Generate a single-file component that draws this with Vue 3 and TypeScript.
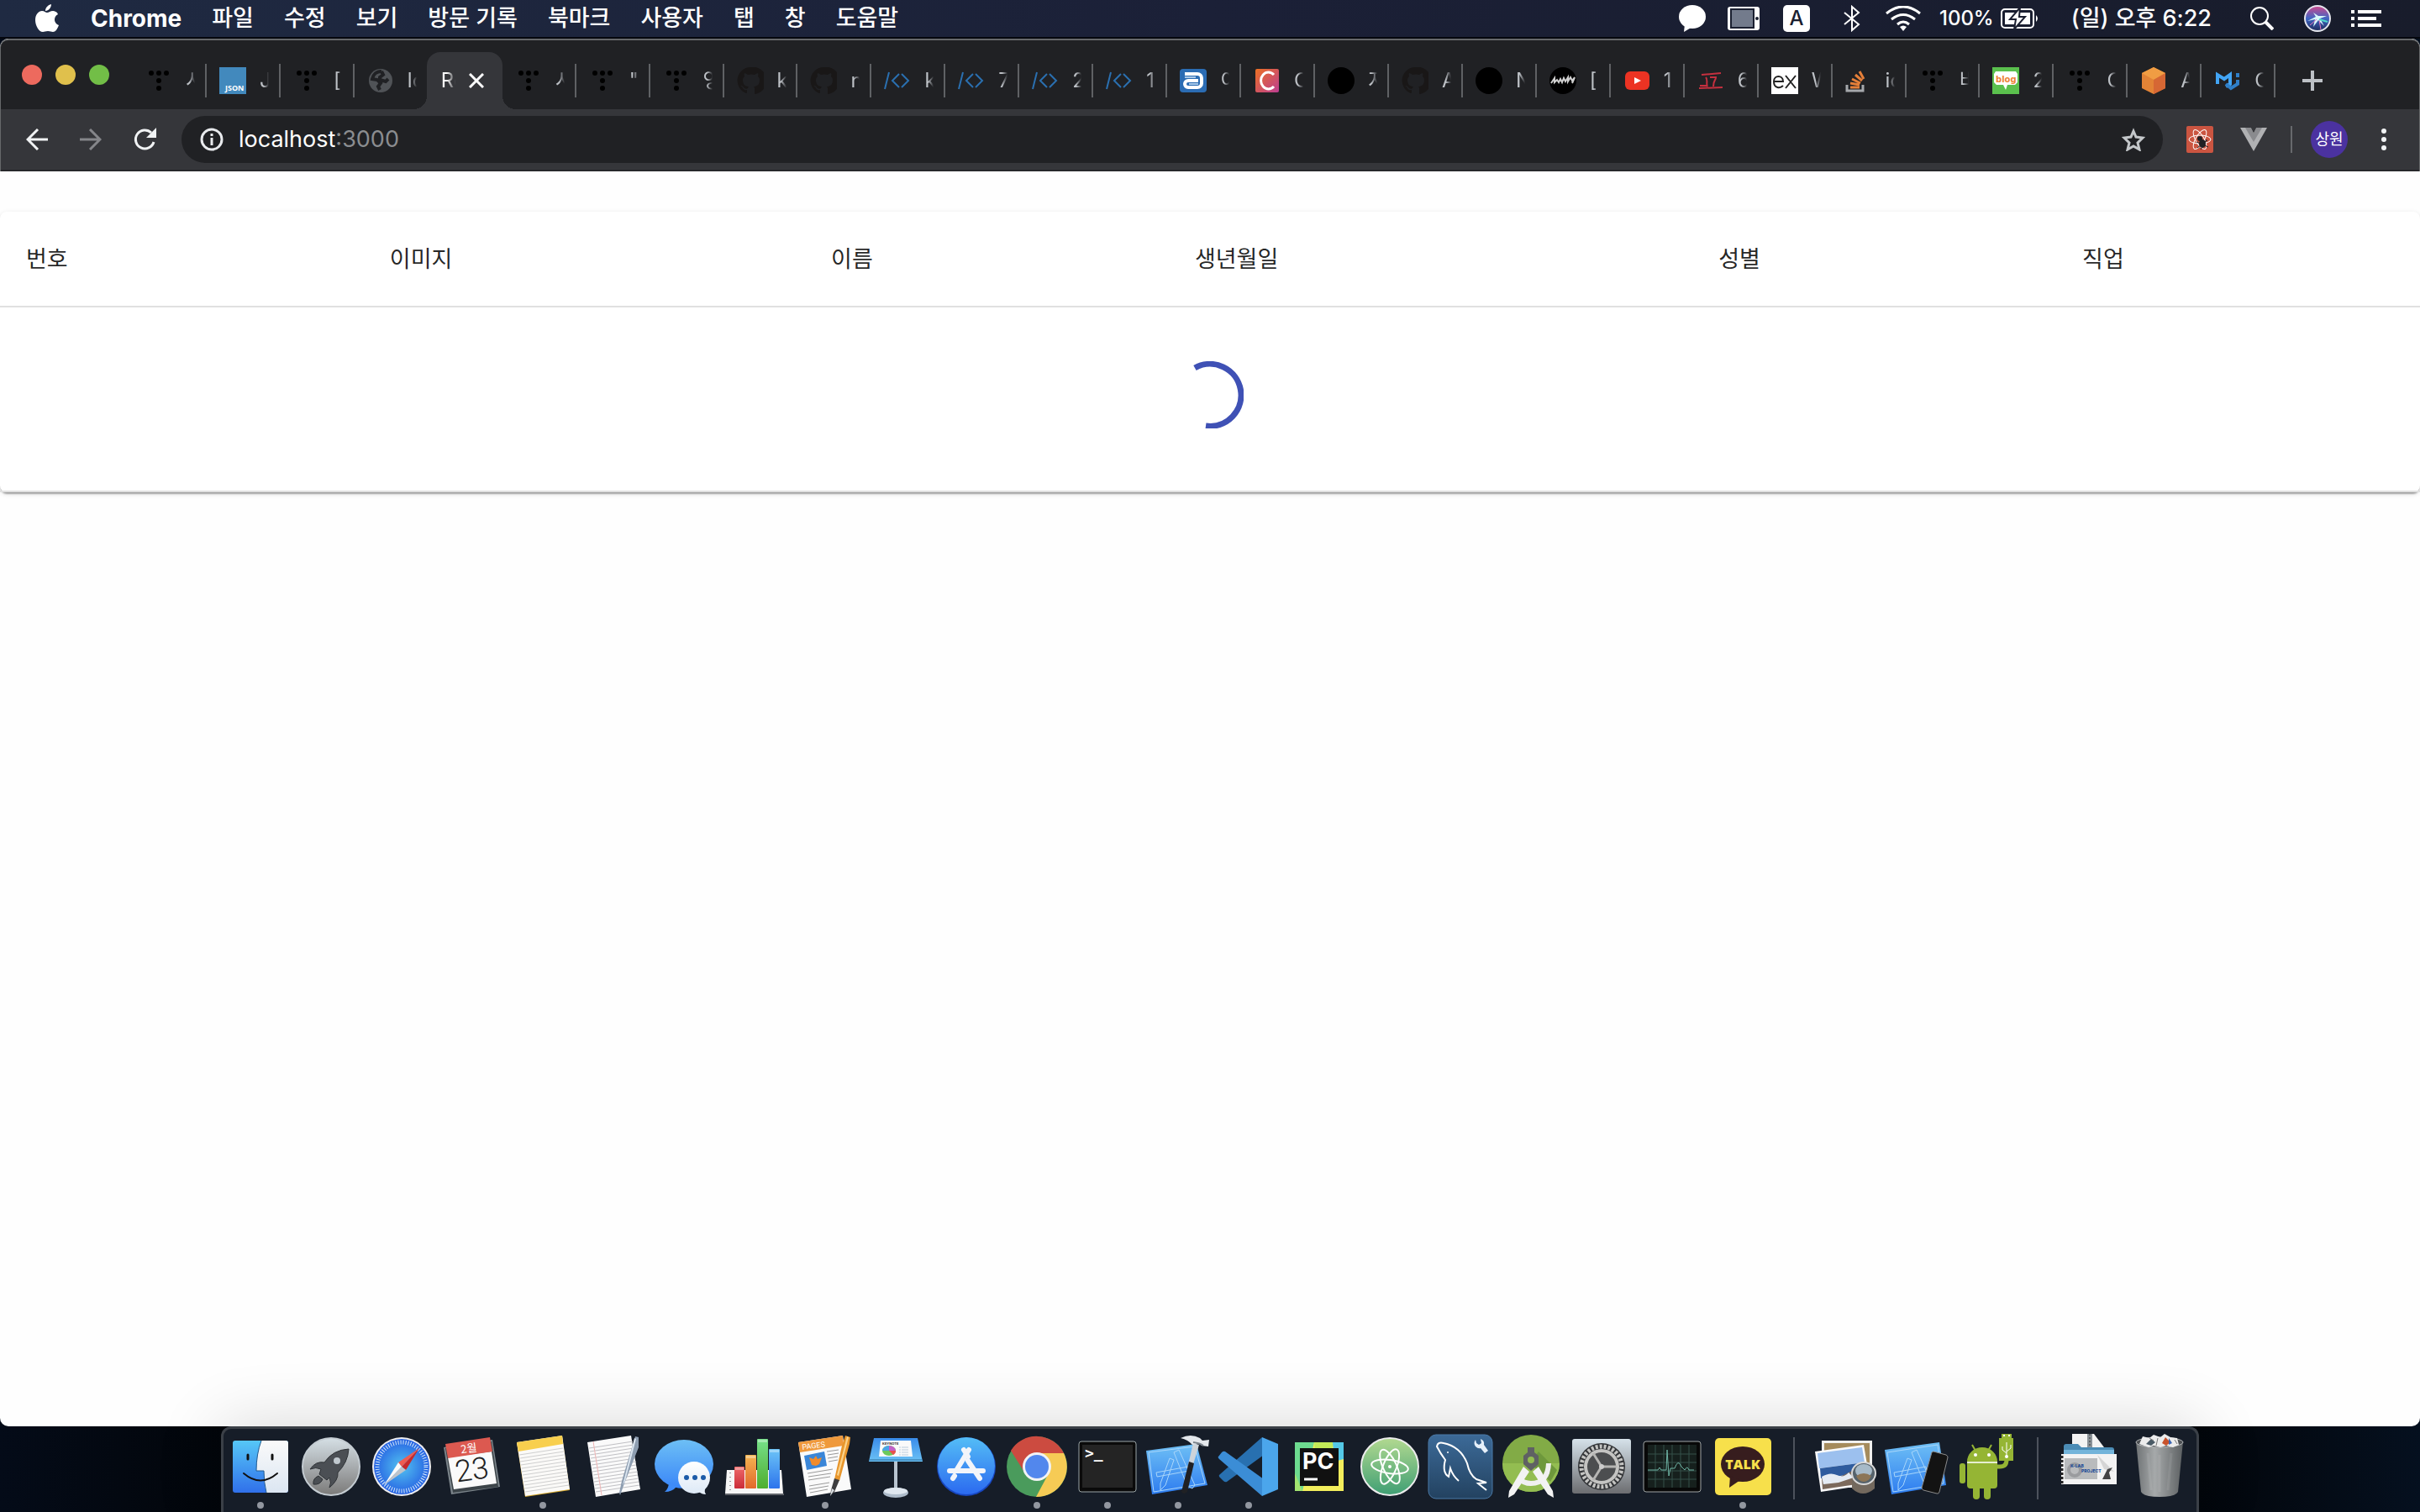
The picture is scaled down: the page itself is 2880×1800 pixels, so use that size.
<script setup lang="ts">
interface Tab {
  icon: string
  label: string
  active?: boolean
}

interface DockItem {
  name: string
  art: string
  running?: boolean
}

const menus: string[] = ['파일', '수정', '보기', '방문 기록', '북마크', '사용자', '탭', '창', '도움말']

const githubPath =
  'M16 0a16 16 0 0 0-5 31c1 0 1-1 1-1v-3c-4 1-5-2-5-2-1-2-2-2-2-2-1-1 0-1 0-1 2 0 3 2 3 2 1 2 4 2 5 1 0-1 1-2 1-2-4 0-7-2-7-8 0-2 1-3 2-4 0-1-1-2 0-4 0 0 1 0 4 2a15 15 0 0 1 8 0c3-2 4-2 4-2 1 2 0 3 0 4 1 1 2 2 2 4 0 6-3 8-7 8 1 1 1 2 1 3v5s0 1 1 1A16 16 0 0 0 16 0z'

const favicons: Record<string, string> = {
  tistory:
    '<g fill="#000"><circle cx="7" cy="7" r="3"/><circle cx="16" cy="7" r="3"/><circle cx="25" cy="7" r="3"/><circle cx="16" cy="16" r="3"/><circle cx="16" cy="25" r="3"/></g>',
  json:
    '<rect width="32" height="32" fill="#4289bd"/><text x="7" y="28" font-family="Open Sans, sans-serif" font-size="9" font-weight="700" fill="#fff">JSON</text>',
  globe:
    '<circle cx="16" cy="16" r="14" fill="#505357"/><path d="M17 5c-6 0-10 4-11 9l6 1 4 4-3 4 2 4M17 5l2 4-4 3v3l7 2 3-3" fill="none" stroke="#202124" stroke-width="4"/>',
  github: `<path d="${githubPath}" fill="#191717"/>`,
  code:
    '<path d="M6 6L1 26M18 8l-8 8 8 8M21 8l8 8-8 8" fill="none" stroke="#2a70b0" stroke-width="2"/>',
  alba:
    '<rect x="0" y="2" width="32" height="28" rx="4" fill="#2b6cb3"/><path d="M6 8h15a5 5 0 0 1 5 5v6a5 5 0 0 1-5 5H10a4 4 0 0 1 0-8h12" fill="none" stroke="#fff" stroke-width="4"/><path d="M6 12h13M11 20h11" stroke="#a8c8e8" stroke-width="2"/>',
  carbon:
    '<defs><linearGradient id="fc" x1="0" y1="0" x2="1" y2="1"><stop offset="0" stop-color="#ec7023"/><stop offset="1" stop-color="#bc3d92"/></linearGradient></defs><rect x="2" y="2" width="28" height="28" rx="2" fill="url(#fc)"/><path d="M24 9a9 10 0 1 0 0 14" fill="none" stroke="#fff" stroke-width="3"/>',
  black: '<circle cx="16" cy="16" r="16" fill="#000"/>',
  jiwhy:
    '<circle cx="16" cy="16" r="16" fill="#000"/><path d="M2 19l4-6v5l3-3 2 3 2-4 2 4 2-5 2 4 3-5v5l3-5 2 4 3-4-3 7" fill="none" stroke="#d0d0d0" stroke-width="2"/>',
  youtube:
    '<rect x="2" y="5" width="29" height="22" rx="6" fill="#ec3323"/><path d="M13 12l8 4-8 4z" fill="#fff"/>',
  stand:
    '<path d="M5 9l23-2M2 25l28-1M10 12c3 3 0 8 2 11M15 12h7c0 4-3 3-3 11M3 22h9" fill="none" stroke="#c5303f" stroke-width="2"/>',
  ex:
    '<rect width="32" height="32" fill="#fff"/><path d="M3 17h11c0-8-11-8-11 0 0 9 8 8 11 5M17 10l12 15M29 10L17 25" fill="none" stroke="#222" stroke-width="2"/>',
  stack:
    '<path d="M2 21v7h19v-7" fill="none" stroke="#a5a8ac" stroke-width="3"/><path d="M6 24h11M6 19l11 2M8 14l10 5M12 9l8 7M17 5l5 9" stroke="#e57f39" stroke-width="3"/>',
  blog:
    '<rect width="32" height="32" fill="#5ac04d"/><path d="M4 5h24l2 3v10l-3 3h-9l-2 6-3-6H5l-3-3V8z" fill="#fff"/><text x="4" y="18" font-family="DejaVu Sans, sans-serif" font-size="10" font-weight="700" fill="#ed8436">blog</text>',
  cube:
    '<path d="M16 0l14 7v18l-14 7-14-7V7z" fill="#e28336"/><path d="M16 0l14 7-14 8L2 7z" fill="#f09d43"/><path d="M16 15l14-8v18l-14 7z" fill="#d66734"/>',
  mui:
    '<path d="M4 20V9l8 5 7-5v11l-5 3" fill="none" stroke="#42a5f5" stroke-width="4"/><path d="M14 20l6 5 8-5v-5M28 7v5" fill="none" stroke="#2f7fc8" stroke-width="4"/>',
}

const tabs: Tab[] = [
  { icon: 'tistory', label: '시' },
  { icon: 'json', label: 'J' },
  { icon: 'tistory', label: '[' },
  { icon: 'globe', label: 'lo' },
  { icon: '', label: 'Re', active: true },
  { icon: 'tistory', label: '시' },
  { icon: 'tistory', label: '"영' },
  { icon: 'tistory', label: '영' },
  { icon: 'github', label: 'k' },
  { icon: 'github', label: 'n' },
  { icon: 'code', label: 'k' },
  { icon: 'code', label: '7' },
  { icon: 'code', label: '2' },
  { icon: 'code', label: '1' },
  { icon: 'alba', label: '이' },
  { icon: 'carbon', label: 'C' },
  { icon: 'black', label: '지' },
  { icon: 'github', label: 'A' },
  { icon: 'black', label: 'N' },
  { icon: 'jiwhy', label: '[' },
  { icon: 'youtube', label: '1' },
  { icon: 'stand', label: '6' },
  { icon: 'ex', label: 'W' },
  { icon: 'stack', label: 'io' },
  { icon: 'tistory', label: '비' },
  { icon: 'blog', label: '2' },
  { icon: 'tistory', label: 'C' },
  { icon: 'cube', label: 'A' },
  { icon: 'mui', label: 'C' },
]

const columns: string[] = ['번호', '이미지', '이름', '생년월일', '성별', '직업']

const grad = (id: string, from: string, to: string): string =>
  `<defs><linearGradient id="${id}" x1="0" y1="0" x2="0" y2="1"><stop offset="0" stop-color="${from}"/><stop offset="1" stop-color="${to}"/></linearGradient></defs>`

/* Parallel rules of a slanted sheet of paper */
const rules = (top: number, bottom: number, step: number, colour: string): string => {
  let d = ''
  for (let y = top; y < bottom; y += step) {
    const x = 12 + Math.round(((y - 14) * 10) / 64)
    d += `M${x} ${y}l52-8`
  }
  return `<path d="${d}" stroke="${colour}" stroke-width="1" fill="none"/>`
}

/* Ruler-and-pencil "A" drawn on blueprint icons */
const blueprint =
  '<path d="M37 25l6-3 19 42-3 4-6-3zM32 32l5 2-10 30-6 6v-8zM16 49l38-7 1 5-38 7z" fill="none" stroke="#a9d6fa" stroke-width="1"/>'

const apps: DockItem[] = [
  {
    name: 'Finder',
    running: true,
    art:
      grad('d1', '#56c7f7', '#3070ea') + grad('d1b', '#fafafa', '#dbe6f2') +
      '<rect x="9" y="11" width="66" height="62" rx="3" fill="url(#d1)"/><path d="M43 11h29a3 3 0 0 1 3 3v56a3 3 0 0 1-3 3H49q-3-12-3-26h-9q0-20 6-36z" fill="url(#d1b)"/><path d="M43 11q-6 16-6 36h9q0 14 3 26" fill="none" stroke="#205a90" stroke-width="1"/><path d="M27 28v5M56 28v5" stroke="#111" stroke-width="3" stroke-linecap="round"/><path d="M22 50q20 17 40 0" fill="none" stroke="#111" stroke-width="2" stroke-linecap="round"/>',
  },
  {
    name: 'Launchpad',
    art:
      grad('d2', '#d5dfe5', '#7b7a79') +
      '<circle cx="42" cy="42" r="34" fill="url(#d2)" stroke="#c4ccd2" stroke-width="2"/><path d="M63 21Q44 22 34 37Q24 35 17 45Q24 42 30 45L28 51L37 58L40 55Q43 61 40 67Q51 58 50 49Q62 37 63 21z" fill="#4b4f54" stroke="#2e3236"/><circle cx="49" cy="35" r="4" fill="#c1c9cf"/><path d="M27 53Q20 56 21 63Q29 64 32 57z" fill="#4b4f54" stroke="#2e3236"/>',
  },
  {
    name: 'Safari',
    art:
      '<defs><radialGradient id="d3"><stop offset="0" stop-color="#52c2f0"/><stop offset="1" stop-color="#2763e3"/></radialGradient></defs><circle cx="42" cy="42" r="35" fill="#ededf0"/><circle cx="42" cy="42" r="33" fill="url(#d3)"/><circle cx="42" cy="42" r="29" fill="none" stroke="#d4e8fb" stroke-width="5" stroke-dasharray="1 2"/><path d="M63 20L47 46L42 42z" fill="#c62a2c"/><path d="M63 20L38 37L42 42z" fill="#ee5c52"/><path d="M21 64L38 37L42 42z" fill="#fafafa"/><path d="M21 64L47 46L42 42z" fill="#bfc4ca"/>',
  },
  {
    name: '캘린더',
    art:
      '<path d="M8 19l58-9 9 56-58 9z" fill="#7c858b"/><path d="M10 20l55-8 8 54-54 7z" fill="#3c4449"/><path d="M13 31l52-7 6 38-51 7z" fill="#fafafa"/><path d="M10 15l53-8 3 17-53 8z" fill="#dc5950"/><g transform="rotate(-8 40 42)" text-anchor="middle"><text x="41" y="25" font-family="Noto Sans CJK KR, sans-serif" font-size="13" fill="#fff">2월</text><text x="41" y="58" font-family="Roboto, sans-serif" font-weight="300" font-size="36" fill="#222">23</text></g>',
  },
  {
    name: '메모',
    running: true,
    art:
      '<path d="M11 14l54-8 9 64-53 8z" fill="#d6a82c"/><path d="M11 13l54-8 9 64-53 8z" fill="#fbfaf8"/>' +
      rules(28, 74, 4, '#cfcfcf') +
      '<path d="M11 13l54-8 1 10-53 9z" fill="#f8cf4e"/>',
  },
  {
    name: '텍스트 편집기',
    art:
      '<path d="M11 13l52-8 11 64-53 9z" fill="#fafafa"/>' +
      rules(20, 74, 4, '#c0c0c4') +
      '<path d="M18 12l10 64" stroke="#efb4b4" stroke-width="1"/><path d="M68 6l4 1v12L55 62l-5 14-1-3 3-14z" fill="#8d9db0"/><path d="M67 8l2 1-13 50-3 5z" fill="#dce6f0"/>',
  },
  {
    name: '메시지',
    art:
      grad('d7', '#6dbff5', '#3a86f8') + grad('d7b', '#ffffff', '#dde9f6') +
      '<ellipse cx="42" cy="39" rx="35" ry="29" fill="url(#d7)"/><path d="M24 60q0 8-5 12q9 0 14-6z" fill="#3f8cf8"/><circle cx="54" cy="55" r="19" fill="url(#d7b)"/><path d="M60 72q3 3 8 3q-2-3-1-7z" fill="#e5eef8"/><g fill="#1c5ba8"><circle cx="45" cy="55" r="3"/><circle cx="55" cy="55" r="3"/><circle cx="65" cy="55" r="3"/></g>',
  },
  {
    name: 'Numbers',
    art:
      grad('d8a', '#ee6a6a', '#cb2c38') + grad('d8b', '#f3b451', '#e2692c') + grad('d8c', '#77e08a', '#4fae2f') + grad('d8d', '#6cc4f7', '#2d74ec') +
      '<path d="M9 46h65l2 28H7z" fill="#f6f6f6"/><path d="M7 75h70" stroke="#aaa"/><path d="M13 49v24" stroke="#999" stroke-width="2" stroke-dasharray="1 4"/><rect x="18" y="42" width="12" height="26" rx="1" fill="url(#d8a)"/><rect x="31" y="28" width="13" height="40" rx="1" fill="url(#d8b)"/><rect x="45" y="9" width="13" height="59" rx="1" fill="url(#d8c)"/><rect x="59" y="21" width="13" height="47" rx="1" fill="url(#d8d)"/><g fill="#fff" opacity=".35"><path d="M19 43h10v3H19zM32 29h11v3H32zM46 10h11v3H46zM60 22h11v3H60z"/></g>',
  },
  {
    name: 'Pages',
    running: true,
    art:
      '<path d="M10 13l53-8 10 64-53 9z" fill="#fafafa"/><path d="M10 13l53-8 1 12-52 8z" fill="#ef993c"/><text x="15" y="22" transform="rotate(-8 15 22)" font-family="Roboto, sans-serif" font-size="9" fill="#fff">PAGES</text><path d="M17 29l24-5 3 17-24 5z" fill="#3a86d8"/><path d="M23 31l5 2 3-4 2 4 5-2-3 8-4 2-5-1z" fill="#f08b2c"/><path d="M44 24l14-2M45 28l13-2M45 32l12-2M46 36l11-2M21 50l30-5M22 54l27-4M22 58l26-4M23 65l24-4M23 69l23-4M24 73l21-4" stroke="#9a9a9a" stroke-width="1"/><path d="M66 5l6 2-1 8-12 44-6-2 9-40z" fill="#e8962c"/><path d="M68 6l2 1-12 46-2-1z" fill="#fbd38b"/><path d="M53 56l6 2-6 14-5 5 1-7z" fill="#3d3d3f"/><path d="M50 68l3 2-5 7z" fill="#d8dde2"/>',
  },
  {
    name: 'Keynote',
    art:
      grad('d10', '#3a8cea', '#6cc2f5') +
      '<path d="M40 35h4v36h-4z" fill="#b8c4d0"/><ellipse cx="42" cy="73" rx="15" ry="6" fill="#aebccb"/><ellipse cx="42" cy="71" rx="14" ry="4" fill="#dfe7ef"/><path d="M16 8h52l6 28H10z" fill="url(#d10)"/><path d="M10 34h64" stroke="#2b6c9c"/><path d="M24 11h36l2 19H22z" fill="#fafafa"/><text x="26" y="16" font-family="Inter, sans-serif" font-weight="700" font-size="4" fill="#333">KEYNOTE</text><ellipse cx="34" cy="23" rx="8" ry="6" fill="#6cc95c"/><path d="M34 23v-6a8 6 0 0 1 8 6z" fill="#c45fc8"/><path d="M34 23h-8a8 6 0 0 1 8-6z" fill="#4aa4e8"/><path d="M34 23h8a8 6 0 0 1-3 5z" fill="#e8524c"/><path d="M46 19h11M46 22h11M46 25h11M46 28h11" stroke="#bcd" stroke-dasharray="2 1 8 0"/>',
  },
  {
    name: 'App Store',
    art:
      grad('d11', '#54bdf6', '#2b6af0') +
      '<circle cx="42" cy="42" r="35" fill="#1746c0"/><circle cx="42" cy="41" r="34" fill="url(#d11)"/><g stroke="#f2f5fa" stroke-width="6" stroke-linecap="round" fill="none"><path d="M45 22L31 45M39 22l5 8M44 35l14 21M22 47h40M28 53l-2 3"/></g>',
  },
  {
    name: 'Chrome',
    running: true,
    art:
      '<circle cx="42" cy="42" r="36" fill="#4a9b5c"/><path d="M11 23A36 36 0 0 1 74 26H42A16 16 0 0 0 28 50z" fill="#cc4b40"/><path d="M74 26A36 36 0 0 1 41 78L56 50A16 16 0 0 0 42 26z" fill="#f6cb55"/><circle cx="42" cy="42" r="17" fill="#f2f3f5"/><circle cx="42" cy="42" r="14" fill="#5287ed"/>',
  },
  {
    name: '터미널',
    running: true,
    art:
      '<rect x="8" y="12" width="68" height="60" rx="3" fill="#0a0a0a" stroke="#9aa5a6" stroke-width="1"/><rect x="12" y="16" width="60" height="51" fill="#242424"/><text x="15" y="32" font-family="DejaVu Sans Mono, monospace" font-weight="700" font-size="18" fill="#fff">&gt;_</text>',
  },
  {
    name: 'Xcode',
    running: true,
    art:
      grad('d14', '#6fc0f5', '#2d7cf0') +
      '<path d="M4 23l60-8 13 49-66 11z" fill="url(#d14)"/><path d="M7 25l55-7 12 44-61 10z" fill="none" stroke="#a9d6fa"/>' +
      blueprint +
      '<path d="M60 14l7 2-9 30-5-2z" fill="#cdd4da"/><path d="M55 36l6 2-8 34q-4 4-7 0z" fill="#202124"/><path d="M45 8q12-6 23 0l3 3 8-1-1 8-8-1-3-3-8 2q-5-6-14-8z" fill="#e4e8ec"/><path d="M60 13q8 1 12 4" fill="none" stroke="#79828a" stroke-width="2"/>',
  },
  {
    name: 'Visual Studio Code',
    running: true,
    art:
      '<path d="M58 7l2 21-44 32q-2 1-4-1l-5-5q-1-2 1-3z" fill="#2870b0"/><path d="M14 24q-2-1-4 1l-4 5q-1 1 1 3l51 44 2-20z" fill="#3b8dd6"/><path d="M58 7l19 8v54l-19 8z" fill="#4ba6ec"/>',
  },
  {
    name: 'PyCharm',
    art:
      '<rect x="13" y="13" width="58" height="58" fill="#f3ee5c"/><path d="M13 13h23L22 71h-9z" fill="#6ddb90"/><path d="M36 13h24l-20 50z" fill="#c3ea58"/><path d="M58 13h13v20L60 36z" fill="#54c8e6"/><path d="M13 50l9 21h-9z" fill="#a3e470"/><rect x="19" y="20" width="46" height="45" fill="#111"/><text x="22" y="45" font-family="Inter, sans-serif" font-weight="700" font-size="27" fill="#fff">PC</text><path d="M24 57h16" stroke="#fff" stroke-width="3"/>',
  },
  {
    name: 'Atom',
    art:
      grad('d17', '#b2d990', '#3f9f74') +
      '<circle cx="42" cy="42" r="34" fill="url(#d17)" stroke="#ececec" stroke-width="2"/><g fill="none" stroke="#fff" stroke-width="2"><ellipse cx="42" cy="42" rx="22" ry="8" transform="rotate(8 42 42)"/><ellipse cx="42" cy="42" rx="22" ry="8" transform="rotate(65 42 42)"/><ellipse cx="42" cy="42" rx="22" ry="8" transform="rotate(-68 42 42)"/></g><circle cx="42" cy="42" r="2" fill="#fff"/>',
  },
  {
    name: 'MySQL Workbench',
    art:
      grad('d18', '#3c6a98', '#234260') +
      '<rect x="4" y="4" width="76" height="76" rx="9" fill="url(#d18)" stroke="#4b7aa8"/><path d="M40 59Q33 53 30 44L28 54Q20 49 24 34Q18 26 14 18Q15 12 22 14Q42 18 50 38Q53 52 61 57L73 61L63 62L73 70" fill="none" stroke="#fff" stroke-width="2"/><circle cx="27" cy="25" r="1" fill="#fff"/><path d="M60 10q-3 4 0 8 3 3 6 2l5 6 4-3-5-7q1-5-4-7l1 5-3 2-3-2z" fill="#e6f0fa"/>',
  },
  {
    name: 'Android Studio',
    art:
      '<circle cx="42" cy="38" r="34" fill="#82ab46"/><path d="M8 38a34 34 0 0 0 68 0z" fill="#93bd51"/><path d="M51 24l22 22-8 14-24-22z" fill="#6e983c"/><path d="M63 38Q62 62 42 62Q33 62 28 56" fill="none" stroke="#f0f0f0" stroke-width="6"/><path d="M33 42l7 6-18 27-7 4 1-8zM51 42l-7 6 18 27 7 4-1-8z" fill="#f3f3f3"/><path d="M38 19h8v6l5 4v10l-9 8-9-8V29l5-4z" fill="#5f6163"/><circle cx="42" cy="34" r="4" fill="#93bd51"/>',
  },
  {
    name: '시스템 환경설정',
    art:
      grad('d20', '#d6e2ea', '#6c6d70') +
      '<rect x="7" y="9" width="70" height="65" rx="3" fill="url(#d20)"/><circle cx="42" cy="42" r="28" fill="#333538"/><circle cx="42" cy="42" r="24" fill="none" stroke="#c4c4c2" stroke-width="5" stroke-dasharray="3 2"/><circle cx="42" cy="42" r="19" fill="#4c4e50" stroke="#c4c4c2" stroke-width="4"/><path d="M42 42h18M42 42L32 26M42 42L32 58" stroke="#b5b5b3" stroke-width="3"/><circle cx="42" cy="42" r="3" fill="#ccc"/>',
  },
  {
    name: '활성 상태 보기',
    art:
      '<rect x="8" y="12" width="68" height="60" rx="3" fill="#080808" stroke="#a0a5a5"/><rect x="13" y="16" width="58" height="51" fill="#16201d"/><path d="M13 27h58M13 37h58M13 47h58M13 57h58M22 16v51M32 16v51M42 16v51M52 16v51M62 16v51" stroke="#35504a" stroke-width="1"/><path d="M13 46h12l2-3 2 3h6l1-24 2 31 2-9h5q4-12 8-2l4 4q3-6 5 0h6" fill="none" stroke="#6fb5a5" stroke-width="1"/>',
  },
  {
    name: '카카오톡',
    running: true,
    art:
      '<rect x="9" y="8" width="67" height="68" rx="5" fill="#f7e04b"/><ellipse cx="42" cy="39" rx="26" ry="21" fill="#371d1e"/><path d="M27 53l-1 14 13-9z" fill="#371d1e"/><text x="42" y="45" text-anchor="middle" font-family="Open Sans, sans-serif" font-weight="800" font-size="16" fill="#f7e04b">TALK</text>',
  },
]

const recent: DockItem[] = [
  {
    name: '미리보기',
    art:
      '<path d="M14 11h60v56H14z" fill="#f0f0ee"/><path d="M17 14h54v50H17z" fill="#a58b5c"/><path d="M6 24l58-8 8 47-59 9z" fill="#fafafa"/><path d="M9 26l53-7 3 18-54 7z" fill="#9cc0ee"/><path d="M12 44l53-7 2 12-54 7z" fill="#2f5c9e"/><path d="M14 56l12-5 10 3 14-7 17 2 2 12-54 8z" fill="#7c6a5c"/><path d="M14 54q10-6 18-2t14-3l6 6-18 6-18 2z" fill="#e5ecf4"/><path d="M50 50v18q13 12 27 0V50z" fill="#73695e"/><ellipse cx="64" cy="50" rx="14" ry="13" fill="#56636c" stroke="#d8d8d8" stroke-width="2"/><ellipse cx="64" cy="47" rx="10" ry="8" fill="#a7bac8"/><path d="M55 53q9-6 18 0-3 7-9 7t-9-7z" fill="#8c7556"/>',
  },
  {
    name: 'Simulator',
    art:
      grad('d24', '#6fc0f5', '#2d7cf0') +
      '<path d="M5 22l65-9 8 51-65 11z" fill="url(#d24)"/><path d="M8 25l60-9 7 46-60 10z" fill="none" stroke="#a9d6fa"/>' +
      blueprint +
      '<path d="M61 25q1-1 2-1l15 4q2 1 2 3L70 72q-1 3-3 2l-16-4q-2-1-2-3z" fill="#131313" stroke="#8b8b8b"/>',
  },
  {
    name: 'Android 파일 전송',
    art:
      '<g fill="#95b534"><path d="M19 36a18 17 0 0 1 36 0zM19 38h36v26q0 4-4 4H23q-4 0-4-4z"/><rect x="10" y="38" width="7" height="24" rx="3"/><rect x="26" y="60" width="8" height="21" rx="4"/><rect x="39" y="60" width="8" height="21" rx="4"/><path d="M57 8h17v27H57zM60 3h12v5H60z"/></g><path d="M19 37h36" stroke="#e6eed0" stroke-width="2"/><path d="M25 16l4 7M48 16l-4 7" stroke="#95b534" stroke-width="2"/><path d="M54 42h4q8 0 8-8" fill="none" stroke="#95b534" stroke-width="5"/><g fill="#fff"><circle cx="29" cy="28" r="2"/><circle cx="45" cy="28" r="2"/><circle cx="66" cy="30" r="2"/><path d="M62 4h2v2h-2zM68 4h2v2h-2z"/></g><path d="M66 30V13M66 26l-5-4v-4M66 24l5-4v-4" fill="none" stroke="#fff" stroke-width="1"/>',
  },
]

const stacks: DockItem[] = [
  {
    name: '다운로드',
    art:
      '<path d="M22 3h26l12 16H22z" fill="#f3f3f3"/><path d="M40 3h6v17h-6z" fill="#8a9298"/><path d="M43 3v17" stroke="#333" stroke-dasharray="2 2"/><path d="M12 18q0-3 3-3h14l4 4h36q3 0 3 3v8H12z" fill="#4b8cb6"/><path d="M12 22h60v6H12z" fill="#73b4da"/><path d="M9 27h66v36H9z" fill="#f3f3f3"/><path d="M13 32h39v25H13z" fill="#b9bbbd"/><circle cx="25" cy="46" r="7" fill="none" stroke="#9a9c9f" stroke-width="4"/><path d="M52 28l20 20-12-3z" fill="#d5d5d5"/><path d="M10 29v34" stroke="#222" stroke-width="3" stroke-dasharray="3 2"/><path d="M58 57l6-12 6-2-4 6 2 8z" fill="#444"/><g font-family="Inter, sans-serif" font-weight="800" font-size="5" fill="#1c4c98"><text x="20" y="43">K-LAB</text><text x="33" y="49">PROJECT</text></g>',
  },
  {
    name: '휴지통',
    art:
      '<defs><linearGradient id="d27"><stop offset="0" stop-color="#6f7375"/><stop offset=".4" stop-color="#a6a9aa"/><stop offset="1" stop-color="#5c6062"/></linearGradient></defs><path d="M14 12h56l-6 60q-3 6-22 6t-22-6z" fill="url(#d27)"/><ellipse cx="42" cy="13" rx="28" ry="6" fill="#4c4f52" stroke="#b5b8ba"/><path d="M18 15l4-9 8 2 5-4 8 3 5-4 7 4 8 1 2 8-7 3-8-2-7 2-8-2-6 2z" fill="#ececec"/><path d="M26 15l6-6 5 4-5 4z" fill="#4a5a66"/><path d="M45 14l4-7 6 6-5 4z" fill="#c8532c"/><path d="M53 8l4 6-4 2z" fill="#3e68b4"/><path d="M30 8l5 3M60 10l3 5M40 8l-2 9" stroke="#777"/><path d="M28 26l4 44M42 28v44M56 26l-4 44" stroke="#fff" opacity=".08" stroke-width="3"/>',
  },
]

const dockGroups: DockItem[][] = [apps, recent, stacks]
</script>

<template>
  <div class="desktop">
    <header class="menubar">
      <nav class="menus" aria-label="메뉴">
        <button class="menu apple" aria-label="Apple">
          <svg width="28" height="34" viewBox="0 0 28 34" fill="#fff">
            <path d="M19 0c0 4-3 8-7 8 0-4 3-7 7-8zM14 10c2 0 4-2 7-2 2 0 5 1 6 4-6 3-5 11 1 13-2 5-4 8-7 8-2 0-3-1-6-1s-4 1-6 1C4 33 0 25 0 19 0 12 4 8 8 8c3 0 4 2 6 2z" />
          </svg>
        </button>
        <button class="menu app-name">Chrome</button>
        <button v-for="m in menus" :key="m" class="menu">{{ m }}</button>
      </nav>
      <div class="status">
        <svg class="s-talk" width="32" height="32" viewBox="0 0 32 32" fill="#fff"><ellipse cx="16" cy="14" rx="16" ry="14" /><path d="M7 23l-1 9 10-6z" /></svg>
        <svg class="s-screen" width="38" height="28" viewBox="0 0 38 28">
          <rect width="38" height="28" rx="3" fill="#fff" /><rect x="4" y="3" width="27" height="22" fill="#737b8c" stroke="#1a1f30" stroke-width="2" /><circle cx="35" cy="14" r="2" fill="#1a1f30" />
        </svg>
        <span class="s-input">A</span>
        <svg class="s-bt" width="20" height="32" viewBox="0 0 20 32" fill="none" stroke="#fff" stroke-width="2"><path d="M1 9l17 14-8 7V2l8 7L1 23" /></svg>
        <svg class="s-wifi" width="42" height="30" viewBox="0 0 42 30">
          <path d="M1 9q20-16 40 0M7 16q14-11 28 0M14 22q7-6 14 0" fill="none" stroke="#fff" stroke-width="3" /><path d="M17 25q4-3 8 0l-4 5z" fill="#fff" />
        </svg>
        <span class="s-percent">100%</span>
        <svg class="s-battery" width="46" height="26" viewBox="0 0 46 26">
          <rect x="1" y="2" width="38" height="22" rx="4" fill="none" stroke="#fff" stroke-width="2" /><rect x="5" y="6" width="30" height="14" fill="#fff" /><path d="M42 9q4 4 0 8z" fill="#fff" /><path d="M23 0L11 14h7l-2 12L29 11h-7z" fill="#fff" stroke="#1a1e2f" stroke-width="2" />
        </svg>
        <time class="s-time">(일) 오후 6:22</time>
        <svg class="s-search" width="28" height="28" viewBox="0 0 28 28" fill="none" stroke="#fff" stroke-width="2"><circle cx="11" cy="11" r="10" /><path d="M18 18l9 9" stroke-width="4" /></svg>
        <svg class="s-siri" width="32" height="32" viewBox="0 0 32 32">
          <defs><linearGradient id="siri" x1="0" y1="0" x2="0" y2="1"><stop offset="0" stop-color="#d0488c" /><stop offset=".5" stop-color="#3f66c4" /><stop offset="1" stop-color="#1e2a5a" /></linearGradient></defs>
          <circle cx="16" cy="16" r="15" fill="url(#siri)" stroke="#e4e6ee" stroke-width="2" />
          <path d="M4 19l10-5-3-5 6 4 10 0-8 3 5 9-7-7-6 8 2-9z" fill="#d8f8fa" />
          <path d="M18 18l2 11M7 24l8-7" stroke="#e878c0" stroke-width="1" /><path d="M18 17l10 3" stroke="#4fd8c8" stroke-width="2" />
        </svg>
        <svg class="s-list" width="36" height="20" viewBox="0 0 36 20" stroke="#fff" stroke-width="4"><path d="M0 2h4M8 2h28M0 10h4M8 10h22M0 18h4M8 18h28" /></svg>
      </div>
    </header>

    <main class="window">
      <div class="chrome">
        <div class="tabstrip">
          <div class="lights">
            <button class="light red" aria-label="닫기"></button>
            <button class="light yellow" aria-label="최소화"></button>
            <button class="light green" aria-label="확대"></button>
          </div>
          <div class="tabs" role="tablist">
            <button
              v-for="(t, i) in tabs"
              :key="i"
              class="tab"
              :class="{ active: t.active, plain: tabs[i + 1]?.active }"
              role="tab"
              :aria-selected="!!t.active"
            >
              <svg v-if="t.icon" class="favicon" width="32" height="32" viewBox="0 0 32 32" v-html="favicons[t.icon]"></svg>
              <span class="tab-label">{{ t.label }}</span>
              <svg v-if="t.active" class="tab-close" width="18" height="18" viewBox="0 0 18 18" stroke="#fff" stroke-width="3"><path d="M1 1l16 16M17 1L1 17" /></svg>
            </button>
          </div>
          <button class="new-tab" aria-label="새 탭">
            <svg width="24" height="24" viewBox="0 0 24 24" stroke="#bdc1c6" stroke-width="4"><path d="M12 0v24M0 12h24" /></svg>
          </button>
        </div>

        <div class="toolbar">
          <button class="tool" aria-label="뒤로">
            <svg width="26" height="26" viewBox="0 0 26 26" fill="none" stroke="#f1f3f4" stroke-width="3"><path d="M26 13H2M14 1L2 13l12 12" /></svg>
          </button>
          <button class="tool" aria-label="앞으로">
            <svg width="26" height="26" viewBox="0 0 26 26" fill="none" stroke="#85868a" stroke-width="3"><path d="M0 13h24M12 1l12 12-12 12" /></svg>
          </button>
          <button class="tool" aria-label="새로고침">
            <svg width="28" height="28" viewBox="0 0 28 28"><path d="M25 17a11 11 0 1 1-3-11" fill="none" stroke="#f1f3f4" stroke-width="3" /><path d="M28 0v12H16z" fill="#f1f3f4" /></svg>
          </button>
          <div class="omnibox">
            <svg width="28" height="28" viewBox="0 0 28 28"><circle cx="14" cy="14" r="12" fill="none" stroke="#e8eaed" stroke-width="3" /><path d="M14 7v3M14 12v9" stroke="#e8eaed" stroke-width="3" /></svg>
            <label class="address">
              <input type="text" value="localhost" aria-label="주소" /><span>:3000</span>
            </label>
            <button class="star" aria-label="북마크에 추가">
              <svg width="30" height="28" viewBox="0 0 30 28" fill="none" stroke="#c4c7ca" stroke-width="3"><path d="M15 4l3 7 8 1-6 6 2 8-7-4-7 4 2-8-6-6 8-1z" /></svg>
            </button>
          </div>
          <div class="extensions">
            <button class="ext" aria-label="React Developer Tools">
              <svg width="32" height="32" viewBox="0 0 32 32">
                <rect width="32" height="32" rx="2" fill="#cb5541" /><g fill="none" stroke="#fff" stroke-width="1"><ellipse cx="16" cy="16" rx="13" ry="5" /><ellipse cx="16" cy="16" rx="13" ry="5" transform="rotate(60 16 16)" /><ellipse cx="16" cy="16" rx="13" ry="5" transform="rotate(120 16 16)" /></g>
                <ellipse cx="19" cy="21" rx="4" ry="5" fill="#202124" /><circle cx="16" cy="15" r="3" fill="#202124" /><path d="M12 19l14 6M13 26l12-9M17 28l7-12" stroke="#202124" stroke-width="1" />
              </svg>
            </button>
            <button class="ext" aria-label="Vue.js devtools">
              <svg width="32" height="28" viewBox="0 0 32 28"><path d="M0 0h13l3 6 3-6h13L16 28z" fill="#b0b1b3" /><path d="M6 0h7l3 6 3-6h7L16 17z" fill="#8a8b8e" /><path d="M13 0h6l-3 6z" fill="#35363a" /></svg>
            </button>
            <span class="divider"></span>
            <button class="avatar">상원</button>
            <button class="more" aria-label="메뉴 열기">
              <svg width="6" height="26" viewBox="0 0 6 26" fill="#f1f3f4"><circle cx="3" cy="3" r="3" /><circle cx="3" cy="13" r="3" /><circle cx="3" cy="23" r="3" /></svg>
            </button>
          </div>
        </div>
      </div>

      <section class="page">
        <div class="paper">
          <table>
            <thead>
              <tr>
                <th v-for="c in columns" :key="c" scope="col">{{ c }}</th>
              </tr>
            </thead>
            <tbody>
              <tr>
                <td :colspan="columns.length">
                  <svg class="spinner" width="80" height="80" viewBox="0 0 80 80" role="progressbar" aria-label="불러오는 중">
                    <path d="M22 8A37 37 0 1 1 35 77" fill="none" stroke="#3f51b5" stroke-width="7" />
                  </svg>
                </td>
              </tr>
            </tbody>
          </table>
        </div>
      </section>
    </main>

    <footer class="dock-area">
      <div class="dock">
        <template v-for="(group, g) in dockGroups" :key="g">
          <span v-if="g" class="dock-divider"></span>
          <button v-for="item in group" :key="item.name" class="dock-item" :aria-label="item.name">
            <svg width="84" height="84" viewBox="0 0 84 84" v-html="item.art"></svg>
            <i class="dot" :class="{ on: item.running }"></i>
          </button>
        </template>
      </div>
    </footer>
  </div>
</template>

<style>
body {
  background: #030910;
}
</style>

<style scoped>
.desktop {
  display: flex;
  flex-direction: column;
  min-height: 100vh;
  background: linear-gradient(90deg, #040b18, #020509 10%, #020509 90%, #05101f);
  font-family: Inter, "Noto Sans CJK KR", sans-serif;
  color: #fff;
}

* {
  box-sizing: border-box;
}

button {
  padding: 0;
  border: 0;
  background: none;
  color: inherit;
  font: inherit;
}

svg {
  display: block;
  flex: none;
}

/* Menu bar */
.menubar {
  display: flex;
  justify-content: space-between;
  height: 46px;
  padding: 0 46px 0 42px;
  border-bottom: 2px solid #05070e;
  background: linear-gradient(90deg, #1f2a42, #1b2037 50%, #181c2b);
  font-size: 27px;
  font-weight: 500;
  line-height: 40px;
}

.menus,
.status {
  display: flex;
  align-items: center;
  white-space: nowrap;
}

.menus {
  gap: 36px;
}

.apple {
  margin-right: 2px;
}

.app-name {
  font-size: 28px;
  font-weight: 700;
}

.s-screen {
  margin-left: 26px;
}

.s-input {
  width: 32px;
  height: 32px;
  margin-left: 28px;
  border-radius: 5px;
  background: #fff;
  color: #1a1e2f;
  font-size: 24px;
  line-height: 32px;
  text-align: center;
}

.s-bt {
  margin-left: 40px;
}

.s-wifi {
  margin-left: 30px;
}

.s-percent {
  margin-left: 22px;
  font-size: 24px;
}

.s-battery {
  margin-left: 8px;
}

.s-time {
  margin-left: 38px;
}

.s-search {
  margin-left: 46px;
}

.s-siri {
  margin-left: 36px;
}

.s-list {
  margin-left: 24px;
}

/* Browser window */
.window {
  display: flex;
  flex: 1;
  flex-direction: column;
  overflow: hidden;
  border-radius: 10px;
  background: #fefefe;
}

.chrome {
  border: 2px solid #66686a;
  border-width: 2px 1px 0;
  border-radius: 10px 10px 0 0;
  background: #202124;
}

.tabstrip {
  display: flex;
  align-items: flex-end;
  height: 82px;
  padding-left: 25px;
}

.lights {
  display: flex;
  flex: none;
  gap: 16px;
  width: 132px;
  padding-bottom: 29px;
}

.light {
  width: 24px;
  height: 24px;
  border-radius: 50%;
}

.red {
  background: #ed6a5e;
}

.yellow {
  background: #e0c04c;
}

.green {
  background: #72be47;
}

.tabs {
  display: flex;
  min-width: 0;
}

.tab {
  position: relative;
  display: flex;
  flex: 0 1 88px;
  align-items: center;
  gap: 16px;
  width: 88px;
  height: 68px;
  padding-left: 15px;
  color: #bdc1c6;
  font-size: 24px;
  line-height: 32px;
}

.tab:not(.active):not(.plain) {
  background: linear-gradient(#5f6164, #5f6164) right center / 2px 40px no-repeat;
}

.tab-label {
  flex: none;
  width: 11px;
  overflow: hidden;
  text-align: left;
  white-space: nowrap;
  mask-image: linear-gradient(90deg, #000 40%, transparent);
}

.tab.active {
  flex-basis: 90px;
  margin-left: -2px;
  padding-left: 17px;
  border-radius: 16px 16px 0 0;
  background: #35363a;
  color: #fff;
}

.tab.active .tab-label {
  width: 17px;
}

.tab.active::before,
.tab.active::after {
  position: absolute;
  bottom: 0;
  width: 16px;
  height: 16px;
  content: "";
}

.tab.active::before {
  right: 100%;
  background: radial-gradient(circle at 0 0, transparent 16px, #35363a 16px);
}

.tab.active::after {
  left: 100%;
  background: radial-gradient(circle at 100% 0, transparent 16px, #35363a 16px);
}

.new-tab {
  padding: 0 32px 22px;
}

.toolbar {
  display: flex;
  align-items: center;
  height: 74px;
  padding: 0 13px 0 11px;
  border-bottom: 2px solid #27282b;
  background: #35363a;
}

.tool {
  display: grid;
  flex: none;
  place-items: center;
  width: 64px;
  height: 64px;
}

.omnibox {
  display: flex;
  flex: 1;
  align-items: center;
  gap: 18px;
  height: 56px;
  margin-left: 12px;
  padding: 0 20px 0 22px;
  border-radius: 28px;
  background: #202124;
}

.address {
  display: flex;
  flex: 1;
  align-items: center;
  color: #8b8d90;
  font-size: 27px;
  line-height: 36px;
}

.address input {
  field-sizing: content;
  padding: 0;
  border: 0;
  outline: 0;
  background: none;
  color: #fff;
  font: inherit;
}

.extensions {
  display: flex;
  flex: none;
  align-items: center;
}

.ext {
  margin-left: 28px;
}

.ext + .ext {
  margin-left: 32px;
}

.divider {
  width: 2px;
  height: 32px;
  margin: 0 22px 0 28px;
  background: #67696c;
}

.avatar {
  width: 44px;
  height: 44px;
  border-radius: 50%;
  background: #4b32a0;
  font-size: 18px;
  line-height: 44px;
}

.more {
  padding: 8px 26px 8px 40px;
}

/* Web page */
.page {
  padding-top: 48px;
  color: rgba(0, 0, 0, 0.87);
}

.paper {
  border-radius: 8px;
  background: #fff;
  box-shadow:
    0 4px 2px -2px rgba(0, 0, 0, 0.2),
    0 2px 2px 0 rgba(0, 0, 0, 0.14),
    0 2px 6px 0 rgba(0, 0, 0, 0.12);
}

table {
  width: 100%;
  border-collapse: collapse;
  table-layout: fixed;
}

th {
  width: 15%;
  padding: 37px 32px 35px 31px;
  border-bottom: 2px solid #e0e0e0;
  font-size: 27px;
  font-weight: 400;
  line-height: 40px;
  text-align: left;
}

th:nth-child(2) {
  width: 18.2%;
}

th:nth-child(4) {
  width: 21.6%;
}

td {
  padding: 64px 32px 74px;
  border-bottom: 2px solid #e0e0e0;
}

.spinner {
  margin: 0 auto;
}

/* Dock */
.dock-area {
  position: relative;
  display: flex;
  justify-content: center;
}

.dock {
  display: flex;
  padding: 3px 2px 4px;
  border: 3px solid #3b4047;
  border-bottom: 0;
  border-radius: 12px 12px 0 0;
  background: #161d28;
  box-shadow: 0 0 80px rgba(0, 0, 0, 0.16);
}

.dock-item {
  flex: none;
  width: 84px;
}

.dot {
  display: block;
  width: 8px;
  height: 8px;
  margin: 0 auto;
  border-radius: 50%;
}

.dot.on {
  background: #9297a0;
}

.dock-divider {
  width: 2px;
  height: 74px;
  margin: 7px 18px 0;
  background: #4c525c;
}
</style>
